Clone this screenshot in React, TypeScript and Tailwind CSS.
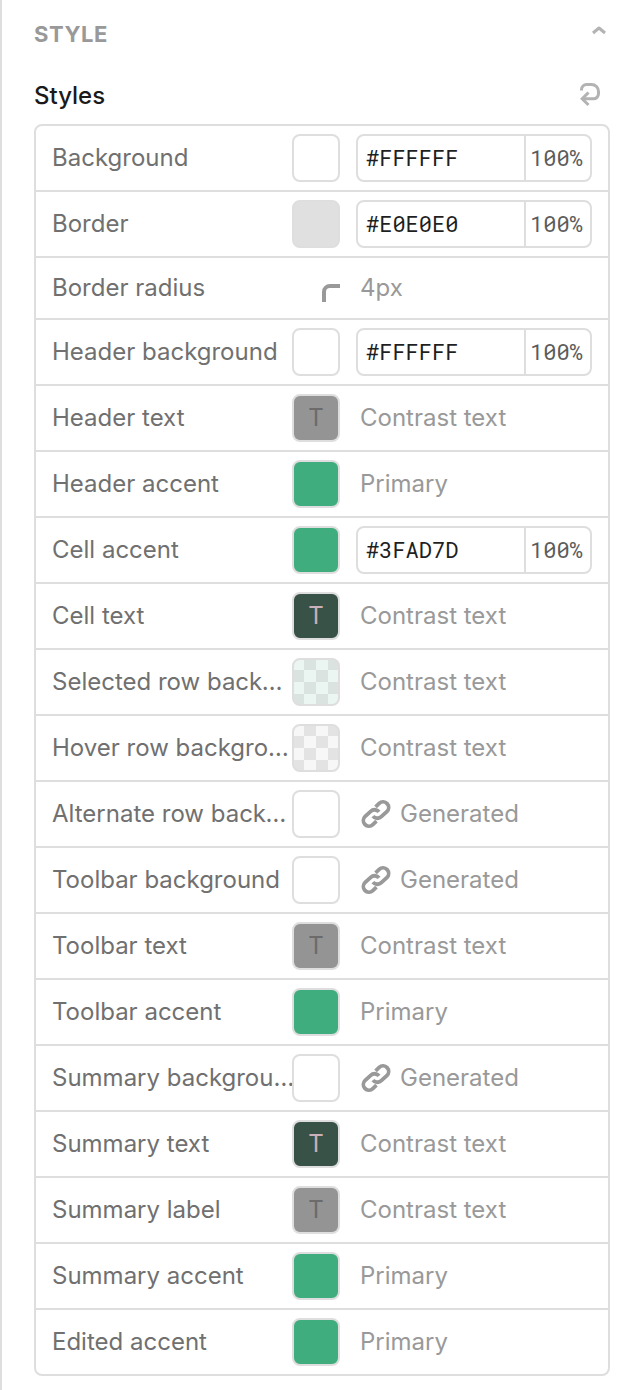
import { clsx } from "clsx";

type Swatch = "white" | "grey" | "green" | "mutedText" | "darkText" | "greenChecker" | "greyChecker" | "radius";

type StyleRow = {
  label: string;
  swatch: Swatch;
  hex?: string;
  value?: string;
  generated?: boolean;
};

const rows: StyleRow[] = [
  { label: "Background", swatch: "white", hex: "#FFFFFF" },
  { label: "Border", swatch: "grey", hex: "#E0E0E0" },
  { label: "Border radius", swatch: "radius", value: "4px" },
  { label: "Header background", swatch: "white", hex: "#FFFFFF" },
  { label: "Header text", swatch: "mutedText", value: "Contrast text" },
  { label: "Header accent", swatch: "green", value: "Primary" },
  { label: "Cell accent", swatch: "green", hex: "#3FAD7D" },
  { label: "Cell text", swatch: "darkText", value: "Contrast text" },
  { label: "Selected row background", swatch: "greenChecker", value: "Contrast text" },
  { label: "Hover row background", swatch: "greyChecker", value: "Contrast text" },
  { label: "Alternate row background", swatch: "white", value: "Generated", generated: true },
  { label: "Toolbar background", swatch: "white", value: "Generated", generated: true },
  { label: "Toolbar text", swatch: "mutedText", value: "Contrast text" },
  { label: "Toolbar accent", swatch: "green", value: "Primary" },
  { label: "Summary background", swatch: "white", value: "Generated", generated: true },
  { label: "Summary text", swatch: "darkText", value: "Contrast text" },
  { label: "Summary label", swatch: "mutedText", value: "Contrast text" },
  { label: "Summary accent", swatch: "green", value: "Primary" },
  { label: "Edited accent", swatch: "green", value: "Primary" },
];

const swatchStyles: Record<Swatch, string> = {
  white: "bg-white",
  grey: "bg-[#e0e0e0]",
  green: "bg-[#3fad7d]",
  mutedText: "bg-[#949494] text-[#6b6b6b]",
  darkText: "bg-[#385248] text-[#c8afb9]",
  greenChecker:
    "bg-[repeating-conic-gradient(#dae3e0_0_25%,#ebf5f2_0_50%)] bg-size-[24px_24px] bg-position-[-2px_-2px]",
  greyChecker:
    "bg-[repeating-conic-gradient(#e3e3e3_0_25%,#f7f7f7_0_50%)] bg-size-[24px_24px] bg-position-[-2px_-2px]",
  radius: "",
};

function ChevronIcon() {
  return (
    <svg width="18" height="12" viewBox="0 0 18 12" fill="none" stroke="#b3b3b3" strokeWidth="3">
      <path d="m3 9 6-5 6 5" strokeLinejoin="round" />
    </svg>
  );
}

function ResetIcon() {
  return (
    <svg width="24" height="28" viewBox="0 0 24 28" fill="none" stroke="#b3b3b3" strokeWidth="3">
      <path d="M3.5 8.500V7.500a5 5 0 0 1 5-5H13.500a7 7 0 0 1 7 7v2.300a5 5 0 0 1-5 5H4" />
      <path d="m10.500 10.500-6.300 6.300 6.300 6.200" />
    </svg>
  );
}

function LinkIcon() {
  return (
    <svg width="32" height="32" viewBox="0 0 32 32" fill="none" stroke="#999" strokeWidth="3.8">
      <g transform="rotate(-43 16 16)">
        <path d="M20.600 10.400h5a5.600 5.600 0 0 1 0 11.200h-7.600a5.600 5.600 0 0 1-5.600-6.200" />
        <path d="M11.400 21.600H6.400a5.600 5.600 0 0 1 0-11.200h7.600a5.600 5.600 0 0 1 5.600 6.200" />
      </g>
    </svg>
  );
}

function RadiusIcon() {
  return (
    <svg width="18" height="18" viewBox="0 0 18 18" fill="none" stroke="#999" strokeWidth="4">
      <path d="M2 18V8a6 6 0 0 1 6-6h10" />
    </svg>
  );
}

function SwatchButton({ label, swatch }: { label: string; swatch: Swatch }) {
  if (swatch === "radius") {
    return (
      <span className="flex w-12 shrink-0 justify-end pt-2.5">
        <RadiusIcon />
      </span>
    );
  }

  return (
    <button
      type="button"
      aria-label={`${label} color`}
      className={clsx(
        "size-12 shrink-0 rounded-lg border-2 border-[#dedede] text-2xl leading-7",
        swatchStyles[swatch]
      )}>
      {(swatch === "mutedText" || swatch === "darkText") && "T"}
    </button>
  );
}

function ColorField({ label, hex }: { label: string; hex: string }) {
  return (
    <div className="flex h-12 min-w-0 flex-1 overflow-hidden rounded-lg border-2 border-[#dedede] font-['Roboto_Mono','Liberation_Mono',monospace] text-[22px]">
      <input
        aria-label={`${label} hex`}
        defaultValue={hex}
        className="min-w-0 flex-1 px-2 text-[#1f1f1f] outline-none"
      />
      <input
        aria-label={`${label} opacity`}
        defaultValue="100%"
        className="w-[66px] border-l-2 border-[#dedede] px-1 text-[#5c5c5c] outline-none"
      />
    </div>
  );
}

function Row({ label, swatch, hex, value, generated }: StyleRow) {
  return (
    <li
      className={clsx(
        "flex items-center border-b-2 border-[#dedede] px-4 last:border-b-0",
        swatch === "radius" ? "h-[62px]" : "h-[66px] last:h-16"
      )}>
      <span className="-mr-1 w-61 shrink-0 truncate leading-8 text-[#707070]">{label}</span>
      <SwatchButton label={label} swatch={swatch} />
      <div className="flex min-w-0 flex-1 pl-4">
        {hex ? (
          <ColorField label={label} hex={hex} />
        ) : (
          <span className="flex items-center gap-2 pl-1 leading-8 text-[#999]">
            {generated && <LinkIcon />}
            {value}
          </span>
        )}
      </div>
    </li>
  );
}

export default function App() {
  return (
    <aside className="min-h-screen border-l-2 border-[#dedede] bg-white px-8 pt-[18px] pb-3.5 font-['Inter',sans-serif] text-2xl">
      <header className="flex h-8 items-center justify-between">
        <h2 className="text-[22px] leading-8 font-bold tracking-wide text-[#999]">STYLE</h2>
        <button type="button" aria-label="Collapse style" className="mr-0.5 pb-2">
          <ChevronIcon />
        </button>
      </header>

      <div className="mt-[30px] flex h-8 items-center justify-between">
        <h3 className="leading-8 font-medium text-[#1a1a1a]">Styles</h3>
        <button type="button" aria-label="Reset styles" className="mr-2">
          <ResetIcon />
        </button>
      </div>

      <ul className="mt-3 rounded-lg border-2 border-[#dedede]">
        {rows.map((row) => (
          <Row key={row.label} {...row} />
        ))}
      </ul>
    </aside>
  );
}
